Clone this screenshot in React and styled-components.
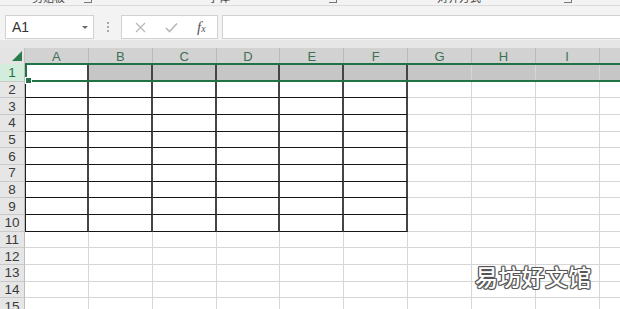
import React from "react";
import styled, { createGlobalStyle } from "styled-components";

const GlobalStyle = createGlobalStyle`
	body {
		margin: 0;
		background: #fff;
		font-family: "Liberation Sans", Arial, sans-serif;
		overflow: hidden;
	}
`;

const COLS = ["A", "B", "C", "D", "E", "F", "G", "H", "I", "J"];
const ROWS = Array.from({ length: 15 }, (_, i) => i + 1);

const ribbonGroups = [
	{ label: "剪贴板", width: 100, labelLeft: 32 },
	{ label: "字体", width: 245, labelLeft: 108 },
	{ label: "对齐方式", width: 235, labelLeft: 92 },
];

export default function App(){
	return (
		<Window>
			<GlobalStyle />
			<RibbonEdge>
				{ribbonGroups.map((g, i) => (
					<RibbonGroup key={i} $width={g.width}>
						<GroupLabel $left={g.labelLeft}>{g.label}</GroupLabel>
						<Launcher />
					</RibbonGroup>
				))}
			</RibbonEdge>

			<FormulaBar>
				<NameBox>
					<span>A1</span>
					<Caret />
				</NameBox>
				<Grip>
					<i /><i /><i />
				</Grip>
				<FxBox>
					<FxIcon>
						<svg width="11" height="11" viewBox="0 0 11 11">
							<path d="M1 1 L10 10 M10 1 L1 10" stroke="#b8b8b8" strokeWidth="1.3" fill="none" />
						</svg>
					</FxIcon>
					<FxIcon>
						<svg width="13" height="11" viewBox="0 0 13 11">
							<path d="M1 6 L4.5 9.5 L12 1.5" stroke="#b8b8b8" strokeWidth="1.6" fill="none" />
						</svg>
					</FxIcon>
					<FxLabel>f<sub>x</sub></FxLabel>
				</FxBox>
				<FormulaInput />
			</FormulaBar>

			<HeaderGap />

			<Sheet>
				<Corner>
					<svg width="10" height="10" viewBox="0 0 10 10">
						<path d="M10 0 L10 10 L0 10 Z" fill="#2b7a4b" />
					</svg>
				</Corner>
				{COLS.map(c => <ColHead key={c}>{c}</ColHead>)}

				{ROWS.map(r => (
					<React.Fragment key={r}>
						<RowHead $active={r === 1}>{r}</RowHead>
						{COLS.map((c, ci) => {
							const boxed = r <= 10 && ci < 6;
							return (
								<Cell
									key={c}
									$boxed={boxed}
									$leftEdge={boxed && ci === 0}
									$shaded={r === 1 && ci > 0}
								/>
							);
						})}
					</React.Fragment>
				))}

				<RowSelection>
					<FillHandle />
				</RowSelection>
			</Sheet>

			<Watermark>易坊好文馆</Watermark>
		</Window>
	);
}

const Window = styled.div`
	position: relative;
	width: 620px;
	height: 309px;
	overflow: hidden;
	background: #fff;
`;

const RibbonEdge = styled.div`
	display: flex;
	height: 5px;
	overflow: hidden;
	background: #f3f3f3;
	border-bottom: 1px solid #dcdcdc;
`;

const RibbonGroup = styled.div`
	position: relative;
	flex: 0 0 ${p => p.$width}px;
	display: flex;
	justify-content: flex-end;
	padding-right: 8px;
	box-sizing: border-box;
`;

const GroupLabel = styled.span`
	position: absolute;
	left: ${p => p.$left}px;
	top: -9px;
	font-family: "Noto Sans CJK SC", sans-serif;
	font-size: 11px;
	line-height: 12px;
	color: #444;
`;

const Launcher = styled.span`
	width: 7px;
	height: 3px;
	border-right: 1px solid #777;
	border-bottom: 1px solid #777;
	margin-top: -1px;
`;

const FormulaBar = styled.div`
	display: flex;
	align-items: center;
	height: 34px;
	padding: 9px 0 1px 5px;
	box-sizing: border-box;
	background: #f3f3f3;
`;

const Box = styled.div`
	height: 24px;
	box-sizing: border-box;
	background: #fff;
	border: 1px solid #d2d2d2;
`;

const NameBox = styled(Box)`
	width: 89px;
	display: flex;
	align-items: center;
	justify-content: space-between;
	padding: 0 5px 0 6px;
	font-size: 14px;
	color: #333;
`;

const Caret = styled.span`
	width: 0;
	height: 0;
	border-left: 3.5px solid transparent;
	border-right: 3.5px solid transparent;
	border-top: 3.5px solid #6a6a6a;
`;

const Grip = styled.div`
	width: 27px;
	display: flex;
	flex-direction: column;
	align-items: center;
	gap: 2px;

	i {
		width: 2px;
		height: 2px;
		background: #a8a8a8;
	}
`;

const FxBox = styled(Box)`
	width: 97px;
	display: flex;
	align-items: center;
	padding-left: 11px;
	gap: 17px;
`;

const FxIcon = styled.span`
	display: flex;
	align-items: center;
	width: 14px;
	justify-content: center;
`;

const FxLabel = styled.span`
	font-family: "Liberation Serif", serif;
	font-style: italic;
	font-size: 15px;
	color: #555;
	margin-left: 2px;

	sub {
		font-size: 10px;
		vertical-align: 0;
	}
`;

const FormulaInput = styled(Box)`
	flex: 1;
	margin-left: 4px;
	border-right: none;
`;

const HeaderGap = styled.div`
	height: 8px;
	background: #e6e6e6;
`;

const Sheet = styled.div`
	position: relative;
	width: max-content;
	display: grid;
	grid-template-columns: 25px repeat(10, 63.85px);
	grid-template-rows: 16px 17.5px repeat(14, 16.7px);
`;

const Corner = styled.div`
	display: flex;
	align-items: flex-end;
	justify-content: flex-end;
	padding: 0 2px 3px 0;
	box-sizing: border-box;
	background: #e4e4e4;
	border-right: 1px solid #c4c4c4;
`;

const ColHead = styled.div`
	display: flex;
	align-items: center;
	justify-content: center;
	box-sizing: border-box;
	background: #d2d2d2;
	border-right: 1px solid #bababa;
	font-size: 13px;
	color: #3e7152;
`;

const RowHead = styled.div`
	display: flex;
	align-items: center;
	justify-content: center;
	box-sizing: border-box;
	background: ${p => p.$active ? "#d3eddc" : "#e6e6e6"};
	border-bottom: 1px solid #c9c9c9;
	border-right: 1px solid #bdbdbd;
	font-size: 13.5px;
	color: ${p => p.$active ? "#217346" : "#3a3a3a"};
`;

const Cell = styled.div`
	box-sizing: border-box;
	background: ${p => p.$shaded ? "#c6c6c6" : "#fff"};
	border-right: ${p => p.$boxed ? "2px solid #454545" : "1px solid #d6d6d6"};
	border-bottom: ${p => p.$boxed ? "1px solid #161616" : "1px solid #d6d6d6"};
	border-left: ${p => p.$leftEdge ? "1px solid #222" : "none"};
`;

const RowSelection = styled.div`
	position: absolute;
	left: 25px;
	right: 0;
	top: 15px;
	height: 19px;
	box-sizing: border-box;
	border-top: 2px solid #217346;
	border-bottom: 2px solid #217346;
	border-left: 2px solid #217346;
`;

const FillHandle = styled.span`
	position: absolute;
	left: -2px;
	bottom: -4px;
	width: 5px;
	height: 5px;
	background: #217346;
	border: 1px solid #fff;
`;

const Watermark = styled.div`
	position: absolute;
	left: 475px;
	top: 259px;
	font-family: "Noto Sans CJK SC", sans-serif;
	font-size: 23px;
	font-weight: 500;
	letter-spacing: 0.3px;
	color: #fff;
	text-shadow:
		1px 0 0 #555, -1px 0 0 #555, 0 1px 0 #555, 0 -1px 0 #555,
		1px 1px 0 #666, -1px -1px 0 #666, 1px -1px 0 #666, -1px 1px 0 #666,
		0 0 3px #bbb;
`;
